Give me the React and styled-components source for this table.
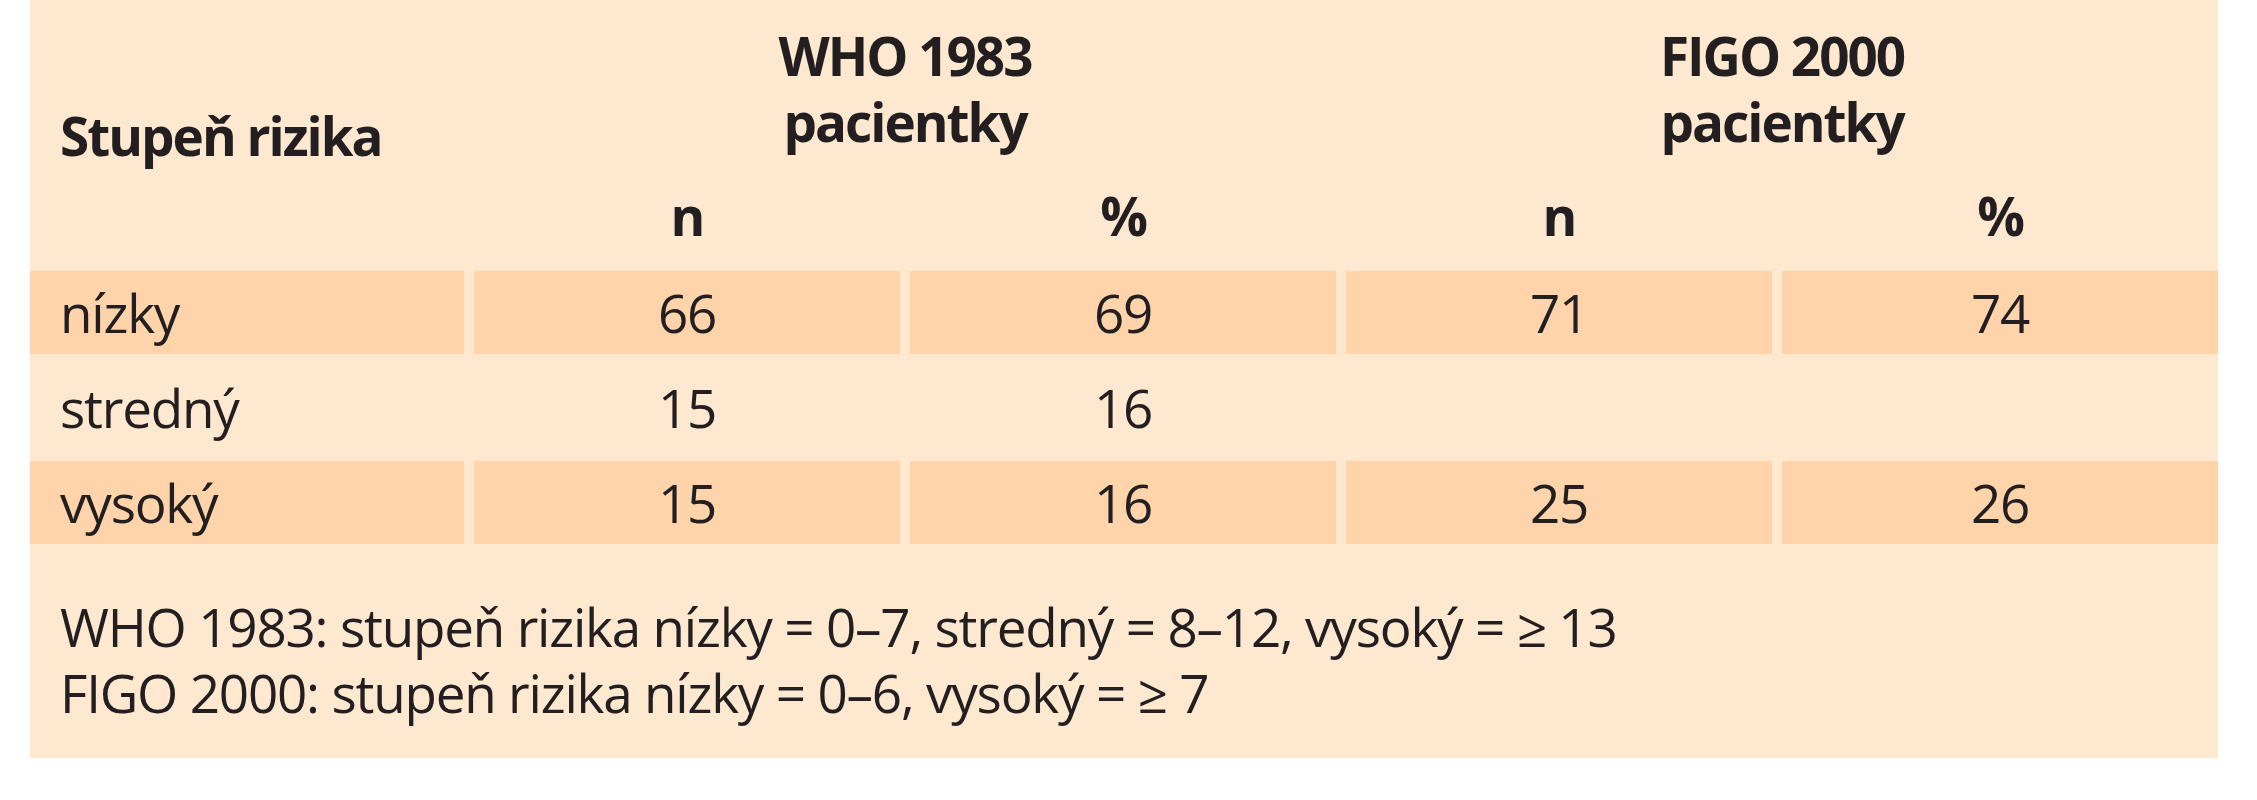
import React from 'react';
import styled, { createGlobalStyle } from 'styled-components';

const GlobalStyle = createGlobalStyle`
  html, body {
    margin: 0;
    padding: 0;
    background: #ffffff;
  }
  body {
    font-family: "Open Sans", "Liberation Sans", sans-serif;
    color: #231f20;
  }
`;

const Panel = styled.div`
  margin-left: 30px;
  width: 2188px;
  height: 758px;
  background: #fee8d0;
  box-sizing: border-box;
  font-size: 53px;
  line-height: 66px;
  letter-spacing: -1.2px;
`;

const Grid = styled.div`
  display: grid;
  grid-template-columns: 434px repeat(3, 426px) 1fr;
  column-gap: 10px;
`;

const HeadGrid = styled(Grid)`
  grid-template-rows: auto auto;
  padding: 23px 0 22px;
  font-weight: 700;
  letter-spacing: -2px;
`;

const RowLabelHead = styled.div`
  grid-row: 1 / span 2;
  grid-column: 1;
  padding: 80px 0 0 30px;
`;

const GroupHead = styled.div`
  grid-row: 1;
  grid-column: ${(p) => p.$col} / span 2;
  text-align: center;
`;

const SubHead = styled.div`
  grid-row: 2;
  grid-column: ${(p) => p.$col};
  padding-top: 28px;
  text-align: center;
`;

const Body = styled.div`
  display: flex;
  flex-direction: column;
  gap: 12px;
`;

const Row = styled(Grid)`
  height: 83px;
`;

const Cell = styled.div`
  display: flex;
  align-items: center;
  justify-content: ${(p) => (p.$label ? 'flex-start' : 'center')};
  padding-left: ${(p) => (p.$label ? '30px' : '0')};
  background: ${(p) => (p.$banded ? '#ffd4aa' : 'transparent')};
`;

const Notes = styled.div`
  padding: 50px 0 0 30px;
`;

const rows = [
  { label: 'nízky', values: ['66', '69', '71', '74'], banded: true },
  { label: 'stredný', values: ['15', '16', '', ''], banded: false },
  { label: 'vysoký', values: ['15', '16', '25', '26'], banded: true },
];

const subHeads = ['n', '%', 'n', '%'];

const App = () => (
  <>
    <GlobalStyle />
    <Panel>
      <HeadGrid>
        <RowLabelHead>Stupeň rizika</RowLabelHead>
        <GroupHead $col={2}>
          WHO 1983
          <br />
          pacientky
        </GroupHead>
        <GroupHead $col={4}>
          FIGO 2000
          <br />
          pacientky
        </GroupHead>
        {subHeads.map((h, i) => (
          <SubHead key={i} $col={i + 2}>{h}</SubHead>
        ))}
      </HeadGrid>
      <Body>
        {rows.map((row) => (
          <Row key={row.label}>
            <Cell $label $banded={row.banded}>{row.label}</Cell>
            {row.values.map((v, i) => (
              <Cell key={i} $banded={row.banded}>{v}</Cell>
            ))}
          </Row>
        ))}
      </Body>
      <Notes>
        WHO 1983: stupeň rizika nízky = 0–7, stredný = 8–12, vysoký = ≥ 13
        <br />
        FIGO 2000: stupeň rizika nízky = 0–6, vysoký = ≥ 7
      </Notes>
    </Panel>
  </>
);

export default App;
